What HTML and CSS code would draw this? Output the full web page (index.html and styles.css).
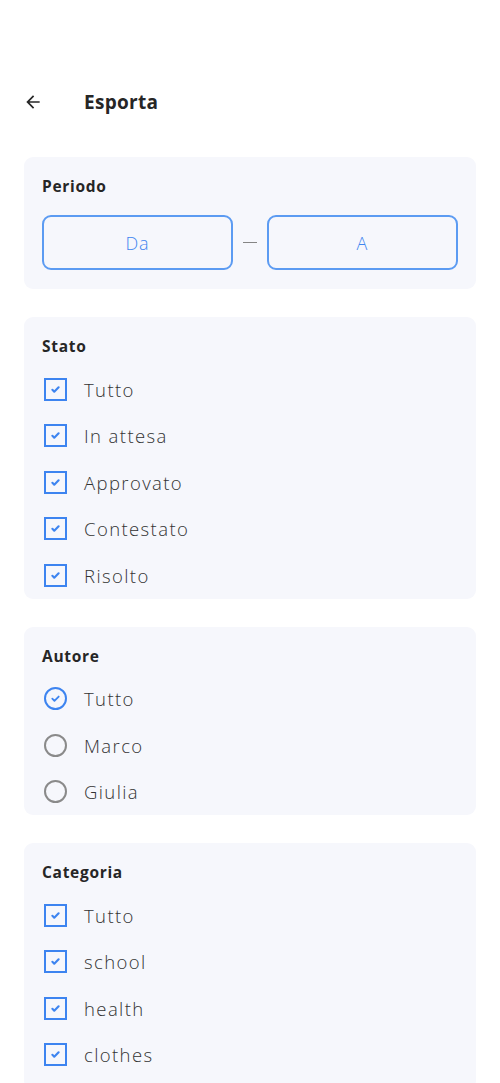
FILE: index.html
```html
<!DOCTYPE html>
<html lang="it">
<head>
    <meta charset="UTF-8">
    <meta name="viewport" content="width=device-width, initial-scale=1.0">
    <title>Esporta</title>
    <link rel="stylesheet" href="styles.css">
</head>
<body>
    <header class="topbar">
        <svg class="back" viewBox="0 0 24 24"><path d="M20 11H7.83l5.59-5.59L12 4l-8 8 8 8 1.41-1.41L7.83 13H20v-2z"/></svg>
        <h1>Esporta</h1>
    </header>

    <section class="card">
        <h2>Periodo</h2>
        <div class="range">
            <div class="field">Da</div>
            <span class="dash"></span>
            <div class="field">A</div>
        </div>
    </section>

    <section class="card">
        <h2>Stato</h2>
        <div class="option"><span class="box"><svg viewBox="0 0 24 24"><path d="M7 12.5l3 3 7-7"/></svg></span>Tutto</div>
        <div class="option"><span class="box"><svg viewBox="0 0 24 24"><path d="M7 12.5l3 3 7-7"/></svg></span>In attesa</div>
        <div class="option"><span class="box"><svg viewBox="0 0 24 24"><path d="M7 12.5l3 3 7-7"/></svg></span>Approvato</div>
        <div class="option"><span class="box"><svg viewBox="0 0 24 24"><path d="M7 12.5l3 3 7-7"/></svg></span>Contestato</div>
        <div class="option"><span class="box"><svg viewBox="0 0 24 24"><path d="M7 12.5l3 3 7-7"/></svg></span>Risolto</div>
    </section>

    <section class="card">
        <h2>Autore</h2>
        <div class="option"><span class="radio on"><svg viewBox="0 0 24 24"><path d="M7.5 12.3l3 3 6-6"/></svg></span>Tutto</div>
        <div class="option"><span class="radio"></span>Marco</div>
        <div class="option"><span class="radio"></span>Giulia</div>
    </section>

    <section class="card last">
        <h2>Categoria</h2>
        <div class="option"><span class="box"><svg viewBox="0 0 24 24"><path d="M7 12.5l3 3 7-7"/></svg></span>Tutto</div>
        <div class="option"><span class="box"><svg viewBox="0 0 24 24"><path d="M7 12.5l3 3 7-7"/></svg></span>school</div>
        <div class="option"><span class="box"><svg viewBox="0 0 24 24"><path d="M7 12.5l3 3 7-7"/></svg></span>health</div>
        <div class="option"><span class="box"><svg viewBox="0 0 24 24"><path d="M7 12.5l3 3 7-7"/></svg></span>clothes</div>
    </section>
</body>
</html>
```

FILE: styles.css
```css
body {
    margin: 0;
    background: #FFFFFF;
    font-family: 'Open Sans', 'Noto Sans', sans-serif;
    color: #262626;
}
.topbar {
    display: flex;
    align-items: center;
    height: 56px;
    margin-top: 74px;
    margin-bottom: 27px;
    padding-left: 23px;
}
.back {
    width: 20px;
    height: 20px;
    fill: #262626;
}
.topbar h1 {
    margin: 0 0 0 41px;
    font-size: 19px;
    font-weight: 700;
    letter-spacing: 0.3px;
}
.card {
    margin: 0 24px 28px;
    padding: 18px 18px 0;
    background: #F6F7FC;
    border-radius: 9px;
}
.card.last {
    padding-bottom: 12px;
    margin-bottom: 0;
}
.card h2 {
    margin: 0 0 9px;
    font-size: 15.5px;
    line-height: 22px;
    font-weight: 700;
    letter-spacing: 0.7px;
}
.range {
    display: flex;
    align-items: center;
    margin-top: 18px;
    padding-bottom: 19px;
}
.field {
    flex: 1;
    height: 51px;
    display: flex;
    align-items: center;
    justify-content: center;
    border: 2px solid #5C9BF2;
    border-radius: 9px;
    color: #3F86F0;
    font-size: 18px;
    font-weight: 300;
    letter-spacing: 1px;
}
.dash {
    width: 14px;
    height: 1.5px;
    margin: 0 10px;
    background: #858585;
}
.option {
    display: flex;
    align-items: center;
    height: 46.5px;
    font-size: 18.5px;
    font-weight: 300;
    letter-spacing: 1.4px;
    color: #333333;
}
.box {
    box-sizing: border-box;
    width: 23px;
    height: 23px;
    margin: 0 17px 0 2px;
    border: 2px solid #3D84F0;
    display: flex;
    align-items: center;
    justify-content: center;
}
.box svg {
    width: 15px;
    height: 15px;
    fill: none;
    stroke: #3D84F0;
    stroke-width: 3.4;
    stroke-linecap: round;
    stroke-linejoin: round;
}
.radio {
    box-sizing: border-box;
    width: 23px;
    height: 23px;
    margin: 0 17px 0 2px;
    border: 2px solid #8A8A8A;
    border-radius: 50%;
    display: flex;
    align-items: center;
    justify-content: center;
}
.radio.on {
    border-color: #3D84F0;
}
.radio svg {
    width: 17px;
    height: 17px;
    fill: none;
    stroke: #3D84F0;
    stroke-width: 2.6;
    stroke-linecap: round;
    stroke-linejoin: round;
}
```
